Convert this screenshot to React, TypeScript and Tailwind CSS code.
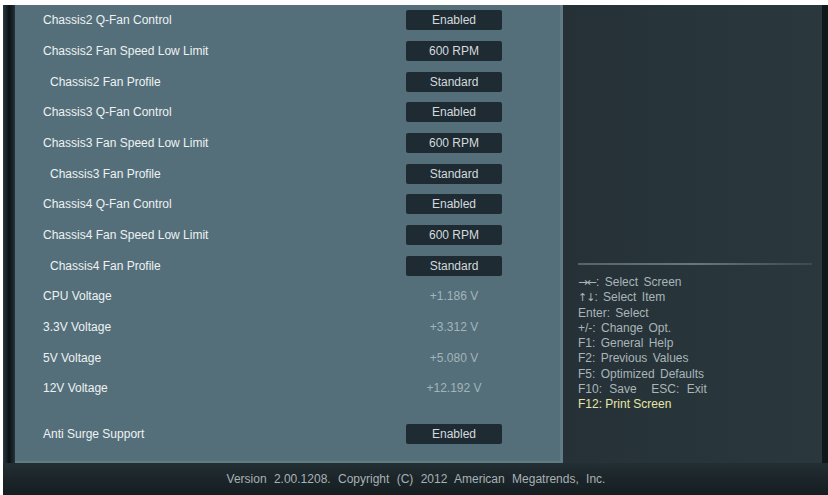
type Row = { label: string; value: string; indent?: boolean; kind: 'box' | 'text' };

const rows: Row[] = [
  { label: 'Chassis2 Q-Fan Control', value: 'Enabled', kind: 'box' },
  { label: 'Chassis2 Fan Speed Low Limit', value: '600 RPM', kind: 'box' },
  { label: 'Chassis2 Fan Profile', value: 'Standard', indent: true, kind: 'box' },
  { label: 'Chassis3 Q-Fan Control', value: 'Enabled', kind: 'box' },
  { label: 'Chassis3 Fan Speed Low Limit', value: '600 RPM', kind: 'box' },
  { label: 'Chassis3 Fan Profile', value: 'Standard', indent: true, kind: 'box' },
  { label: 'Chassis4 Q-Fan Control', value: 'Enabled', kind: 'box' },
  { label: 'Chassis4 Fan Speed Low Limit', value: '600 RPM', kind: 'box' },
  { label: 'Chassis4 Fan Profile', value: 'Standard', indent: true, kind: 'box' },
  { label: 'CPU Voltage', value: '+1.186 V', kind: 'text' },
  { label: '3.3V Voltage', value: '+3.312 V', kind: 'text' },
  { label: '5V Voltage', value: '+5.080 V', kind: 'text' },
  { label: '12V Voltage', value: '+12.192 V', kind: 'text' },
];

const help = [
  'Enter: Select',
  '+/-: Change Opt.',
  'F1: General Help',
  'F2: Previous Values',
  'F5: Optimized Defaults',
];

function SettingRow({ row }: { row: Row }) {
  return (
    <div className="flex items-center h-[30.67px]">
      <div className={`flex-1 text-[12px] text-[#eef2f3] ${row.indent ? 'pl-[35px]' : 'pl-[28px]'}`}>
        {row.label}
      </div>
      {row.kind === 'box' ? (
        <div className="w-[96px] h-[20px] mr-[58px] rounded-[2px] bg-[#1e2b33] text-[#d3dadd] text-[12px] flex items-center justify-center">
          {row.value}
        </div>
      ) : (
        <div className="w-[96px] mr-[58px] text-[#a3b4ba] text-[12px] text-center">{row.value}</div>
      )}
    </div>
  );
}

export default function App() {
  return (
    <div
      className="w-[828px] h-[495px] bg-white pt-[5px] pl-[3px] overflow-hidden"
      style={{ fontFamily: '"Liberation Sans", Arial, sans-serif' }}
    >
      <div className="flex flex-col h-full bg-[#182125]">
        <div className="flex h-[458px]">
          <div className="w-[12px] bg-gradient-to-r from-[#2a3a40] via-[#0b1114] to-[#24333a]" />
          <div className="w-[548px] bg-[#546f7a] border-r-[3px] border-b-[2px] border-[#627c86] flex flex-col">
            {rows.map((r) => (
              <SettingRow key={r.label} row={r} />
            ))}
            <div className="h-[15.33px]" />
            <SettingRow row={{ label: 'Anti Surge Support', value: 'Enabled', kind: 'box' }} />
          </div>
          <div className="flex-1 bg-gradient-to-r from-[#253136] to-[#2a383d] flex flex-col pl-[15px] pr-[10px]">
            <div className="h-[258px]" />
            <div className="h-[2px] bg-gradient-to-r from-[#56646a] via-[#6a777c] to-[#3d4a4f]" />
            <div className="mt-[10px] flex flex-col text-[12px] leading-[15.25px] text-[#aab5b9] [word-spacing:2px]">
              <div>
                <span className="font-['DejaVu_Sans'] text-[12px] tracking-[-1px]">→←</span>: Select Screen
              </div>
              <div>
                <span className="font-['DejaVu_Sans'] text-[11px] tracking-[-1px]">↑↓</span>: Select Item
              </div>
              {help.map((h) => (
                <div key={h}>{h}</div>
              ))}
              <div className="[word-spacing:4px]">F10: Save&nbsp;&nbsp;ESC: Exit</div>
              <div className="text-[#e6e6a6] [word-spacing:0px]">F12: Print Screen</div>
            </div>
          </div>
          <div className="w-[6px] bg-[#11181b]" />
        </div>
        <div className="flex-1 flex items-center justify-center pr-[5px] bg-gradient-to-b from-[#222e33] to-[#151d20]">
          <span className="text-[12px] text-[#a8b1b5] [word-spacing:4px] pl-[6px]">
            Version 2.00.1208. Copyright (C) 2012 American Megatrends, Inc.
          </span>
        </div>
      </div>
    </div>
  );
}
